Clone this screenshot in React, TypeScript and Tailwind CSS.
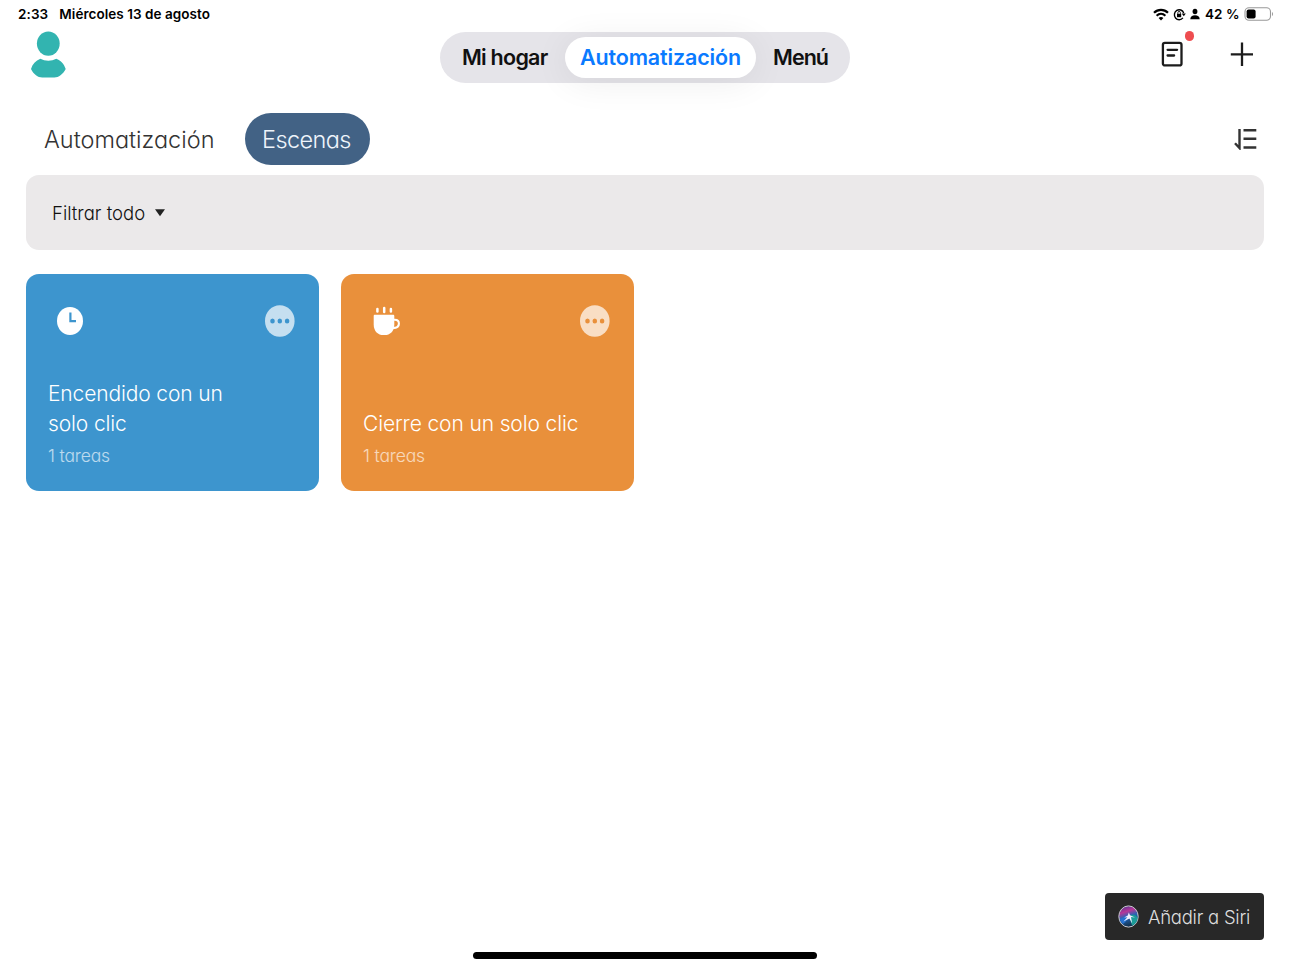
import type { ReactNode } from "react";

type Scene = {
  title: string;
  tasks: string;
  color: string;
  icon: ReactNode;
};

const ClockIcon = () => (
  <svg width="26" height="28" viewBox="0 0 26 28">
    <ellipse cx="13" cy="14" rx="13" ry="14" fill="#fff" />
    <path d="M13.4 5.5v8.7H19" fill="none" stroke="#3d95ce" strokeWidth="2.2" />
  </svg>
);

const CupIcon = () => (
  <svg width="28" height="30" viewBox="0 0 28 30">
    <path
      d="M5.4 3v2.6M12.2 2v4M18.9 3v2.6"
      stroke="#fff"
      strokeWidth="2.5"
      strokeLinecap="round"
    />
    <path
      d="M2.9 8.7H21c.8 0 1.3.5 1.3 1.3v8.5c0 7-4.500 10.600-9.500 10.600h-1.600c-5 0-9.500-3.600-9.500-10.600V10c0-.8.4-1.300 1.200-1.300z"
      fill="#fff"
    />
    <path
      d="M21.600 13.800h1.200c2.600 0 4.100 1.600 4.100 3.900 0 2.600-2 4.200-6 4.400"
      fill="none"
      stroke="#fff"
      strokeWidth="2.1"
    />
  </svg>
);

const scenes: Scene[] = [
  {
    title: "Encendido con un solo clic",
    tasks: "1 tareas",
    color: "bg-[#3d95ce] text-[#3d95ce]",
    icon: <ClockIcon />,
  },
  {
    title: "Cierre con un solo clic",
    tasks: "1 tareas",
    color: "bg-[#e9903b] text-[#e9903b]",
    icon: <CupIcon />,
  },
];

const StatusBar = () => {
  return (
    <div className="flex h-7 items-center justify-between pl-[18px] pr-4 text-[13.5px] font-semibold text-black [font-feature-settings:normal]">
      <div className="flex gap-[11px] whitespace-nowrap">
        <span className="tracking-[0.1px]">2:33</span>
        <span className="tracking-[0.05px]">Miércoles 13 de agosto</span>
      </div>
      <div className="flex items-center">
        <svg width="16" height="13" viewBox="0 0 16 13" fill="none" stroke="#000">
          <path d="M1 4.8C5 .8 11 .8 15 4.8" strokeWidth="2.2" />
          <path d="M3.6 7.7c2.6-2.4 6.2-2.4 8.800 0" strokeWidth="2.1" />
          <path d="M8 12.4 5.6 9.9c1.4-1.2 3.4-1.2 4.8 0z" fill="#000" stroke="none" />
        </svg>
        <svg className="ml-1" width="13" height="13" viewBox="0 0 13 13" fill="none">
          <path d="M9.9 9.9A4.8 5 0 1 1 10.7 5" stroke="#000" strokeWidth="1.4" />
          <path d="M8.700 5.400h4.100l-2 2.800z" fill="#000" />
          <path d="M4 5.900h4.200v3.300H4z" fill="#000" />
          <path d="M4.900 6V4.600c0-1.700 2.400-1.700 2.400 0V6" stroke="#000" strokeWidth=".9" />
        </svg>
        <svg className="ml-1" width="10" height="12" viewBox="0 0 10 12">
          <ellipse cx="5" cy="3.500" rx="2.400" ry="2.800" />
          <path d="M.3 11.200C.3 8.600 2.200 7.300 5 7.300s4.700 1.300 4.700 3.900z" />
        </svg>
        <span className="ml-[5px] w-[35px] whitespace-nowrap tracking-[0.1px]">
          42 %
        </span>
        <svg className="ml-1" width="30" height="14" viewBox="0 0 30 14">
          <rect
            x="1"
            y=".8"
            width="25.5"
            height="12.4"
            rx="4"
            fill="none"
            stroke="#999"
            strokeWidth="1.1"
          />
          <rect x="2.6" y="2.5" width="9" height="9" rx="2" />
          <path d="M28 5c1.400.5 1.400 3.500 0 4z" fill="#999" />
        </svg>
      </div>
    </div>
  );
};

const Header = () => {
  return (
    <div className="flex h-[58px] items-start justify-between pl-[31px] pr-9">
      <div className="w-[160px] pt-[3px]">
        <svg width="35" height="47" viewBox="0 0 35 47" fill="#32b4b0">
          <ellipse cx="17.3" cy="12.6" rx="11.4" ry="12.2" />
          <path d="M9.400 27.800c4.500 2.500 11.300 2.500 15.800 0 5 1.800 7.800 5.200 9.500 10.200-3 5.500-7 8.500-11.300 8.500H11.200C6.800 46.500 2.800 43.500 0 38c1.500-5 4.600-8.400 9.400-10.200z" />
        </svg>
      </div>
      <div className="mt-1 flex h-[51px] w-[410px] items-center rounded-full bg-[#e5e4e9] text-[21.5px] font-semibold whitespace-nowrap text-[#111] [font-feature-settings:normal]">
        <div className="w-[125px] pl-[22px]">
          <span className="tracking-[-0.75px]">Mi hogar</span>
        </div>
        <div className="flex h-[41px] w-[191px] items-center justify-center rounded-full bg-white text-[#0a7aff] shadow-[0_4px_36px_rgba(0,0,0,0.07)]">
          <span className="tracking-[-0.15px]">Automatización</span>
        </div>
        <div className="pl-[17px]">
          <span className="tracking-[-0.95px]">Menú</span>
        </div>
      </div>
      <div className="flex w-[155px] justify-end gap-[45px] pt-3">
        <div className="relative">
          <svg
            width="24"
            height="28"
            viewBox="0 0 24 28"
            fill="none"
            stroke="#1c1c1c"
            strokeWidth="2.3"
            strokeLinecap="round"
          >
            <rect x="1.9" y="2.8" width="18.6" height="22.6" rx="2" />
            <path d="M6.6 9.8h9.500M6.600 15.500h6.500" />
          </svg>
          <div className="absolute -top-[9px] left-[24px] h-[10px] w-[9px] rounded-full bg-[#ee4d50]" />
        </div>
        <svg width="24" height="28" viewBox="0 0 24 28" stroke="#1c1c1c" strokeWidth="2.3">
          <path d="M.8 14.300H23M12 2.500V26" />
        </svg>
      </div>
    </div>
  );
};

const Tabs = () => {
  return (
    <div className="mt-[27px] flex h-[52px] items-center justify-between pl-[44px] pr-[32px]">
      <div className="flex items-center">
        <div className="w-[201px] pt-[2px] text-[23.5px] whitespace-nowrap text-[#333]">
          Automatización
        </div>
        <div className="flex h-[52px] w-[125px] items-center justify-center rounded-[26px] bg-[#426285] pt-[2px] pr-[2px] text-[23.5px] tracking-[-0.6px] text-[#eef4fb]">
          Escenas
        </div>
      </div>
      <svg width="24" height="22" viewBox="0 0 24 22" fill="none" stroke="#333" strokeWidth="2.4">
        <path d="M9.500 2.200h12.800M9.500 10.800h12.800M9.500 19.500h12.800M5.500 1v19L1 15.200" />
      </svg>
    </div>
  );
};

const SceneCard = ({ scene }: { scene: Scene }) => {
  return (
    <div
      className={`flex h-[217px] w-[293px] flex-col justify-between rounded-[13px] px-[22px] pt-[31px] pb-[23px] ${scene.color}`}
    >
      <div className="flex items-center justify-between pr-[2px] pl-[9px]">
        {scene.icon}
        <svg width="30" height="32" viewBox="0 0 30 32" fill="currentColor">
          <ellipse cx="14.8" cy="16" rx="14.8" ry="15.8" fill="#fff" fillOpacity=".7" />
          <ellipse cx="7.500" cy="16" rx="2.300" ry="2.500" />
          <ellipse cx="14.800" cy="16" rx="2.300" ry="2.500" />
          <ellipse cx="22.100" cy="16" rx="2.300" ry="2.500" />
        </svg>
      </div>
      <div>
        <div className="w-[220px] text-[21px] leading-[29.5px] tracking-[-0.13px] text-white">
          {scene.title}
        </div>
        <div className="mt-[6px] text-[17.5px] leading-6 tracking-[-0.15px] text-white/65">
          {scene.tasks}
        </div>
      </div>
    </div>
  );
};

const SiriIcon = () => (
  <svg width="21" height="23" viewBox="0 0 21 23">
    <defs>
      <linearGradient id="siri" x1="0" y1="0" x2=".3" y2="1">
        <stop offset="0" stopColor="#3b3690" />
        <stop offset=".35" stopColor="#b83698" />
        <stop offset=".6" stopColor="#2466b5" />
        <stop offset="1" stopColor="#123454" />
      </linearGradient>
    </defs>
    <ellipse
      cx="10.500"
      cy="11.500"
      rx="9.700"
      ry="10.600"
      fill="url(#siri)"
      stroke="#c8c8d0"
    />
    <path d="M11 11c4-2.500 7-1 8.500 1.500 0 4-2.500 7-5.500 8z" fill="#1b9c98" />
    <path d="M2 14c3-1 6-4 9-4-1 4-3 7-6 9-1.500-1-2.500-3-3-5z" fill="#2671cf" />
    <path
      d="m10.800 7.500 1.200 2.800 5 2.200-4-.4 1.200 6.400-2.800-5-5.900 3 3.900-4.200-3.200.1 3.600-1.900z"
      fill="#f3efff"
    />
  </svg>
);

export default function App() {
  return (
    <div className="flex h-[968px] w-[1290px] flex-col overflow-hidden bg-white font-['Inter',sans-serif] font-light [font-feature-settings:'cv11']">
      <StatusBar />
      <Header />
      <Tabs />
      <div className="mx-[26px] mt-[10px] flex h-[75px] items-center rounded-[13px] bg-[#ebe9ea] pl-[26px] text-[18.5px] text-[#111]">
        <span className="w-[103px] pt-[2px] whitespace-nowrap">Filtrar todo</span>
        <svg width="10" height="8" viewBox="0 0 10 8" fill="#222">
          <path d="M0 .2h10l-5 7z" />
        </svg>
      </div>
      <div className="mx-[26px] mt-6 flex gap-[22px]">
        {scenes.map((scene) => (
          <SceneCard key={scene.title} scene={scene} />
        ))}
      </div>
      <div className="mt-auto mr-[26px] flex h-[47px] w-[159px] items-center self-end rounded-[4px] bg-[#282828] pl-[13px] text-[18.5px] tracking-[-0.25px] whitespace-nowrap text-[#ddd]">
        <SiriIcon />
        <span className="ml-[9px] pt-[2px]">Añadir a Siri</span>
      </div>
      <div className="mx-auto mt-3 mb-[9px] h-[7px] w-[344px] rounded-full bg-black" />
    </div>
  );
}
